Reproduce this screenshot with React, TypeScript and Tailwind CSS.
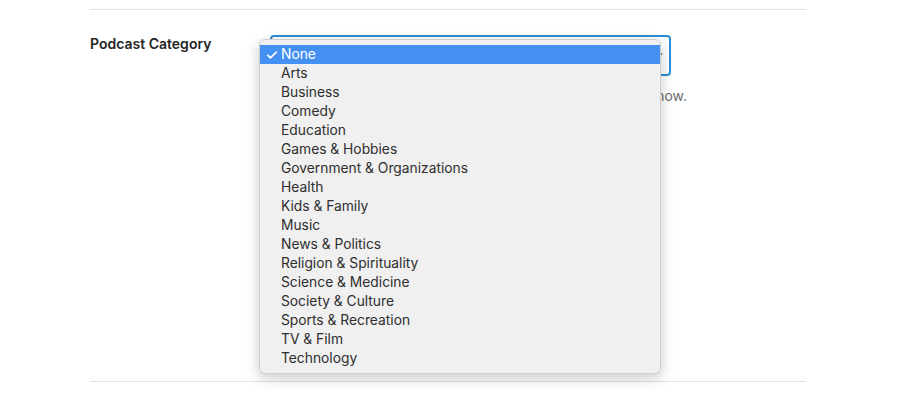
import React from 'react';

const categories = [
  'None',
  'Arts',
  'Business',
  'Comedy',
  'Education',
  'Games & Hobbies',
  'Government & Organizations',
  'Health',
  'Kids & Family',
  'Music',
  'News & Politics',
  'Religion & Spirituality',
  'Science & Medicine',
  'Society & Culture',
  'Sports & Recreation',
  'TV & Film',
  'Technology',
];

const App = () => {
  const selected = 'None';

  return (
    <div className="h-[393px] w-[900px] bg-white font-['Inter','Liberation_Sans',sans-serif] text-[#222]">
      <div className="ml-[90px] w-[716px] pt-[9px]">
        {/* Setting row */}
        <div className="flex h-[373px] border-t border-b border-[#e3e3e3] pt-[25px]">
          <div className="w-[180px] text-[14px] font-semibold leading-[18px] text-[#252525]">
            Podcast Category
          </div>
          <div className="flex flex-col">
            <div className="relative h-[41px] w-[401px] rounded-[4px] border-2 border-[#2b8fd8] bg-white">
              <svg className="absolute right-[6px] top-[15px]" width="8" height="6" viewBox="0 0 8 6">
                <path d="M1 1.5 L4 4.5 L7 1.5" fill="none" stroke="#555" strokeWidth="1.2" />
              </svg>

              {/* Native select popup */}
              <div className="absolute left-[-13px] top-[2px] z-10 w-[402px] rounded-[6px] border border-[#cfcfcf] bg-[#f0f0f0] py-[5px] shadow-[0_4px_14px_rgba(0,0,0,0.22)]">
                {categories.map((c) => (
                  <div
                    key={c}
                    className={
                      c === selected
                        ? 'flex h-[19px] items-center bg-[#4490f3] text-[13.8px] leading-[19px] text-white'
                        : 'flex h-[19px] items-center text-[13.8px] leading-[19px] text-[#2e2e2e]'
                    }
                  >
                    <span className="w-[21px] pl-[5px] text-[15px] font-medium">{c === selected ? '✓' : ''}</span>
                    <span>{c}</span>
                  </div>
                ))}
              </div>
            </div>
            <p className="mt-[11px] text-[13.85px] leading-[18px] text-[#6b6b6b]">
              Choose the category listeners would find your show under now.
            </p>
          </div>
        </div>
      </div>
    </div>
  );
};

export default App;
